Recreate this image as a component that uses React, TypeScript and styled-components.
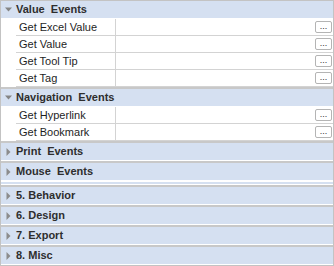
import styled, { createGlobalStyle } from "styled-components";

interface ICategory {
  title: string;
  open: boolean;
  rows: string[];
  tail?: boolean;
}

const categories: ICategory[] = [
  {
    title: "Value\u00a0 Events",
    open: true,
    rows: ["Get Excel Value", "Get Value", "Get Tool Tip", "Get Tag"],
  },
  {
    title: "Navigation\u00a0 Events",
    open: true,
    rows: ["Get Hyperlink", "Get Bookmark"],
  },
  { title: "Print\u00a0 Events", open: false, rows: [] },
  { title: "Mouse\u00a0 Events", open: false, rows: [], tail: true },
  { title: "5. Behavior", open: false, rows: [] },
  { title: "6. Design", open: false, rows: [] },
  { title: "7. Export", open: false, rows: [] },
  { title: "8. Misc", open: false, rows: [] },
];

const Arrow: React.FC<{ open: boolean }> = ({ open }) => (
  <ArrowBox>
    {open ? (
      <svg width="7" height="5" viewBox="0 0 7 5">
        <path d="M0 0.5 H7 L3.5 4.5 Z" fill="#858585" />
      </svg>
    ) : (
      <svg width="5" height="8" viewBox="0 0 5 8">
        <path d="M0.5 0 V8 L4.5 4 Z" fill="#8c8c8c" />
      </svg>
    )}
  </ArrowBox>
);

const App: React.FC = () => {
  return (
    <>
      <GlobalStyle />
      <Grid>
        {categories.map((cat, i) => (
          <Category key={cat.title} $first={i === 0}>
            <Header>
              <Arrow open={cat.open} />
              <HeaderText>{cat.title}</HeaderText>
            </Header>
            {cat.rows.map((row) => (
              <Row key={row}>
                <Indent />
                <NameCell>{row}</NameCell>
                <ValueCell>
                  <EllipsisButton>...</EllipsisButton>
                </ValueCell>
              </Row>
            ))}
            {cat.tail && <Tail />}
          </Category>
        ))}
      </Grid>
    </>
  );
};

const GlobalStyle = createGlobalStyle`
  html, body {
    margin: 0;
    padding: 0;
    background: #ffffff;
  }
  * {
    box-sizing: border-box;
  }
`;

const Grid = styled.div`
  width: 334px;
  height: 266px;
  border: 1px solid #c3c3c3;
  background: #ffffff;
  display: flex;
  flex-direction: column;
  overflow: hidden;
  font-family: Tahoma, "Liberation Sans", Arial, sans-serif;
  font-size: 11px;
  color: #1e1e1e;
`;

const Category = styled.div<{ $first: boolean }>`
  display: flex;
  flex-direction: column;
  border-top: ${({ $first }) => ($first ? "none" : "2px solid #c8c8c8")};
`;

const Header = styled.div`
  height: 18px;
  background: #d5e0f1;
  border-bottom: 1px solid #ffffff;
  display: flex;
  align-items: center;
`;

const ArrowBox = styled.span`
  width: 15px;
  display: flex;
  justify-content: center;
  align-items: center;
  padding-right: 1px;
`;

const HeaderText = styled.span`
  font-weight: bold;
  color: #2e2e2e;
  line-height: 17px;
  white-space: pre;
`;

const Row = styled.div`
  height: 17px;
  display: flex;
`;

const Indent = styled.div`
  width: 15px;
  flex-shrink: 0;
`;

const NameCell = styled.div`
  width: 100px;
  flex-shrink: 0;
  padding-left: 3px;
  line-height: 16px;
  border-bottom: 1px solid #d3d3d3;
  border-right: 1px solid #d3d3d3;
  white-space: nowrap;
`;

const ValueCell = styled.div`
  flex: 1;
  display: flex;
  justify-content: flex-end;
  align-items: center;
  padding-right: 1px;
  padding-bottom: 1px;
  border-bottom: 1px solid #d3d3d3;
`;

const EllipsisButton = styled.div`
  width: 17px;
  height: 12px;
  border: 1px solid #b4b4b4;
  border-radius: 2px;
  background: #ffffff;
  font-size: 9px;
  line-height: 9px;
  text-align: center;
  color: #333333;
  letter-spacing: 0px;
`;

const Tail = styled.div`
  height: 4px;
  border-top: 1px solid #ffffff;
  border-bottom: 1px solid #ffffff;
  background: #d5e0f1;
`;

export default App;
